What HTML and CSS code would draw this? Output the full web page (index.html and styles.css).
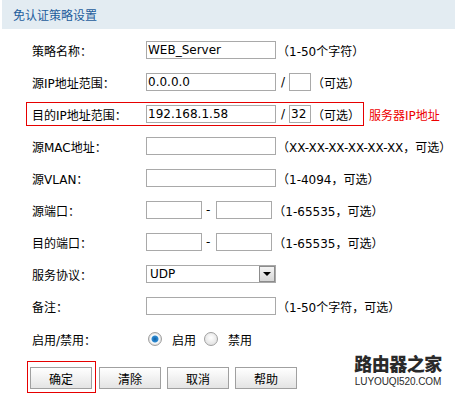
FILE: index.html
```html
<!DOCTYPE html>
<html lang="zh-CN">
<head>
    <meta charset="UTF-8">
    <meta name="viewport" content="width=device-width, initial-scale=1.0">
    <title>免认证策略设置</title>
    <link rel="stylesheet" href="styles.css">
</head>
<body>
    <div class="panel">
        <div class="panel-title">免认证策略设置</div>

        <div class="form">
            <div class="row">
                <span class="label">策略名称：</span>
                <input class="text" type="text" value="WEB_Server">
                <span class="hint">（1-50个字符）</span>
            </div>
            <div class="row">
                <span class="label">源IP地址范围：</span>
                <input class="text" type="text" value="0.0.0.0">
                <span class="sep">/</span>
                <input class="text mask" type="text" value="">
                <span class="hint">（可选）</span>
            </div>
            <div class="row">
                <span class="mark">
                    <span class="label">目的IP地址范围：</span>
                    <input class="text" type="text" value="192.168.1.58">
                    <span class="sep">/</span>
                    <input class="text mask" type="text" value="32">
                    <span class="hint">（可选）</span>
                </span>
                <span class="note">服务器IP地址</span>
            </div>
            <div class="row">
                <span class="label">源MAC地址：</span>
                <input class="text" type="text" value="">
                <span class="hint">（XX-XX-XX-XX-XX-XX，可选）</span>
            </div>
            <div class="row">
                <span class="label">源VLAN：</span>
                <input class="text" type="text" value="">
                <span class="hint">（1-4094，可选）</span>
            </div>
            <div class="row">
                <span class="label">源端口：</span>
                <input class="text port" type="text" value="">
                <span class="dash">-</span>
                <input class="text port" type="text" value="">
                <span class="hint">（1-65535，可选）</span>
            </div>
            <div class="row">
                <span class="label">目的端口：</span>
                <input class="text port" type="text" value="">
                <span class="dash">-</span>
                <input class="text port" type="text" value="">
                <span class="hint">（1-65535，可选）</span>
            </div>
            <div class="row">
                <span class="label">服务协议：</span>
                <span class="select">
                    <span class="select-value">UDP</span>
                    <span class="select-arrow"></span>
                </span>
            </div>
            <div class="row">
                <span class="label">备注：</span>
                <input class="text" type="text" value="">
                <span class="hint">（1-50个字符，可选）</span>
            </div>
            <div class="row radio-row">
                <span class="label">启用/禁用：</span>
                <span class="radio checked"></span>
                <span class="radio-text">启用</span>
                <span class="radio"></span>
                <span class="radio-text">禁用</span>
            </div>
        </div>

        <div class="actions">
            <span class="mark-btn"><button class="btn">确定</button></span>
            <button class="btn">清除</button>
            <button class="btn">取消</button>
            <button class="btn">帮助</button>
        </div>

        <div class="watermark">
            <div class="wm-cn">路由器之家</div>
            <div class="wm-en">LUYOUQI520.COM</div>
        </div>
    </div>
</body>
</html>
```

FILE: styles.css
```css
body {
    margin: 0;
    background-color: #ffffff;
    font-family: "DejaVu Sans", "Noto Sans CJK SC", sans-serif;
    font-size: 12px;
    color: #000000;
}
.panel {
    position: relative;
    width: 455px;
    height: 396px;
}
.panel-title {
    margin-left: 2px;
    height: 29px;
    line-height: 29px;
    padding-left: 11px;
    background-color: #e3ecf2;
    color: #1d5d9c;
    font-family: "Noto Sans CJK SC", sans-serif;
}
.form {
    padding-top: 5px;
    padding-left: 32px;
}
.row {
    display: flex;
    align-items: center;
    height: 32px;
    white-space: nowrap;
}
.label {
    width: 114px;
    flex-shrink: 0;
}
.text {
    box-sizing: border-box;
    width: 130px;
    height: 18px;
    margin: 0;
    padding: 0 0 0 1px;
    border: 1px solid #a9a9a9;
    background-color: #ffffff;
    font-family: "DejaVu Sans", sans-serif;
    font-size: 12px;
    color: #000000;
    outline: none;
}
.text.mask {
    width: 22px;
}
.text.port {
    width: 56px;
}
.sep {
    margin: 0 4px 0 5px;
}
.dash {
    margin: 0 6px 0 4px;
}
.hint {
    margin-left: 1px;
}
.mark {
    display: flex;
    align-items: center;
    margin-left: -6px;
    padding: 0 3px 0 5px;
    height: 22px;
    border: 1px solid #e60000;
}
.note {
    margin-left: 5px;
    color: #ee0000;
}
.select {
    box-sizing: border-box;
    display: flex;
    align-items: center;
    width: 130px;
    height: 18px;
    border: 1px solid #a9a9a9;
}
.select-value {
    flex: 1;
    padding-left: 3px;
}
.select-arrow {
    position: relative;
    box-sizing: border-box;
    width: 16px;
    height: 16px;
    border: 1px solid #8c8c8c;
    background: linear-gradient(#f4f4f4, #d6d6d6);
}
.select-arrow::after {
    content: "";
    position: absolute;
    left: 3px;
    top: 5px;
    border-left: 4px solid transparent;
    border-right: 4px solid transparent;
    border-top: 4px solid #000000;
}
.radio-row {
    height: 34px;
}
.radio {
    box-sizing: border-box;
    width: 14px;
    height: 14px;
    margin-left: 2px;
    border-radius: 50%;
    border: 1px solid #a0a0a0;
    background: radial-gradient(circle at 50% 40%, #ffffff, #d9d9d9);
}
.radio.checked {
    background: radial-gradient(circle, #0f5fa8 0, #2d8ad0 3px, #ffffff 4px, #dcdcdc 6px);
}
.radio-text {
    margin-left: 10px;
    margin-right: 6px;
}
.actions {
    display: flex;
    align-items: flex-start;
    padding-left: 27px;
    margin-top: 5px;
}
.mark-btn {
    display: block;
    padding: 5px 3px 3px 2px;
    border: 1px solid #e60000;
    margin-right: 3px;
}
.btn {
    display: block;
    box-sizing: border-box;
    width: 62px;
    height: 22px;
    margin: 6px 6px 0 0;
    padding: 0;
    border: 1px solid #a0a0a0;
    background: linear-gradient(#ffffff, #e4e4e4);
    font-family: "Noto Sans CJK SC", sans-serif;
    font-size: 12px;
    color: #000000;
}
.mark-btn .btn {
    margin: 0;
}
.watermark {
    position: absolute;
    left: 353px;
    top: 352px;
    width: 90px;
    text-align: center;
    color: #2a2a2a;
}
.wm-cn {
    font-family: "Noto Sans CJK SC", sans-serif;
    font-size: 18px;
    font-weight: 900;
    line-height: 22px;
    letter-spacing: -0.5px;
}
.wm-en {
    margin-top: 2px;
    font-family: "Liberation Sans", sans-serif;
    font-size: 10px;
    line-height: 11px;
    letter-spacing: -0.1px;
}
```
